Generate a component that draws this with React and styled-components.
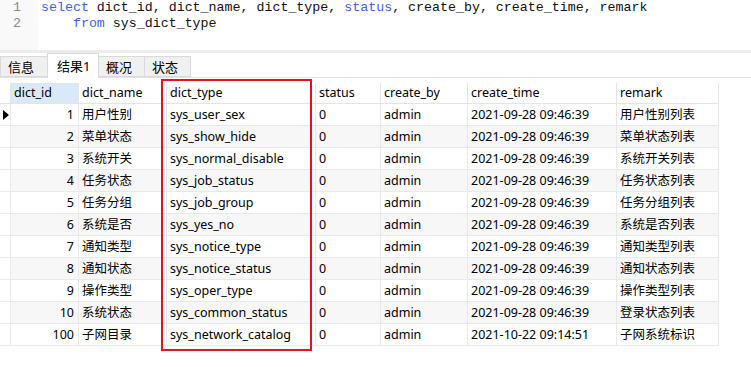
import styled, { createGlobalStyle } from "styled-components";

const GlobalStyle = createGlobalStyle`
  html, body {
    margin: 0;
    padding: 0;
    background: #fff;
  }
  body {
    font-family: "Noto Sans", "Noto Sans CJK SC", sans-serif;
    font-size: 12.5px;
    color: #000;
  }
`;

const columns = "11px 68px 88px 149px 65px 87px 149px 102px";

const rows = [
  [1, "用户性别", "sys_user_sex", "2021-09-28 09:46:39", "用户性别列表"],
  [2, "菜单状态", "sys_show_hide", "2021-09-28 09:46:39", "菜单状态列表"],
  [3, "系统开关", "sys_normal_disable", "2021-09-28 09:46:39", "系统开关列表"],
  [4, "任务状态", "sys_job_status", "2021-09-28 09:46:39", "任务状态列表"],
  [5, "任务分组", "sys_job_group", "2021-09-28 09:46:39", "任务分组列表"],
  [6, "系统是否", "sys_yes_no", "2021-09-28 09:46:39", "系统是否列表"],
  [7, "通知类型", "sys_notice_type", "2021-09-28 09:46:39", "通知类型列表"],
  [8, "通知状态", "sys_notice_status", "2021-09-28 09:46:39", "通知状态列表"],
  [9, "操作类型", "sys_oper_type", "2021-09-28 09:46:39", "操作类型列表"],
  [10, "系统状态", "sys_common_status", "2021-09-28 09:46:39", "登录状态列表"],
  [100, "子网目录", "sys_network_catalog", "2021-10-22 09:14:51", "子网系统标识"],
];

const tabs = [
  { label: "信息", width: 48 },
  { label: "结果1", width: 52, active: true },
  { label: "概况", width: 47 },
  { label: "状态", width: 47 },
];

export default function App() {
  return (
    <Page>
      <GlobalStyle />
      <Editor>
        <Gutter>
          <LineNo>1</LineNo>
          <LineNo>2</LineNo>
        </Gutter>
        <Code>
          <CodeLine>
            <Kw>select</Kw> dict_id, dict_name, dict_type, <Kw>status</Kw>, create_by, create_time, remark
          </CodeLine>
          <CodeLine>
            {"    "}<Kw>from</Kw> sys_dict_type
          </CodeLine>
        </Code>
      </Editor>
      <Splitter />
      <TabBar>
        {tabs.map((t) => (
          <Tab key={t.label} $active={t.active} $width={t.width}>
            {t.label}
          </Tab>
        ))}
      </TabBar>
      <GridArea>
        <Grid>
          <HeadRow>
            <HeadCell />
            <HeadCell $selected>dict_id</HeadCell>
            <HeadCell>dict_name</HeadCell>
            <HeadCell>dict_type</HeadCell>
            <HeadCell>status</HeadCell>
            <HeadCell>create_by</HeadCell>
            <HeadCell>create_time</HeadCell>
            <HeadCell>remark</HeadCell>
          </HeadRow>
          {rows.map((r, i) => (
            <Row key={r[0]} $striped={i % 2 === 1}>
              <Indicator>{i === 0 && <Arrow />}</Indicator>
              <Cell $num>{r[0]}</Cell>
              <Cell>{r[1]}</Cell>
              <Cell>{r[2]}</Cell>
              <Cell>0</Cell>
              <Cell>admin</Cell>
              <Cell>{r[3]}</Cell>
              <Cell>{r[4]}</Cell>
            </Row>
          ))}
          <Highlight />
        </Grid>
      </GridArea>
    </Page>
  );
}

const Page = styled.div`
  width: 751px;
  height: 367px;
  display: flex;
  flex-direction: column;
  overflow: hidden;
`;

const Editor = styled.div`
  height: 50px;
  display: flex;
  background: #fff;
`;

const Gutter = styled.div`
  width: 38px;
  background: #f9f9f9;
  display: flex;
  flex-direction: column;
  align-items: flex-end;
  padding: 0 17px 0 0;
  box-sizing: border-box;
`;

const LineNo = styled.div`
  font-family: "Liberation Mono", monospace;
  font-size: 13.3px;
  line-height: 16px;
  color: #8a8a8a;
`;

const Code = styled.div`
  padding-left: 3px;
  display: flex;
  flex-direction: column;
`;

const CodeLine = styled.div`
  font-family: "Liberation Mono", monospace;
  font-size: 13.3px;
  line-height: 16px;
  white-space: pre;
  color: #111;
`;

const Kw = styled.span`
  color: #3f5ff0;
`;

const Splitter = styled.div`
  height: 3px;
  background: #ececec;
`;

const TabBar = styled.div`
  height: 24px;
  display: flex;
  align-items: flex-end;
  border-bottom: 1px solid #e2e2e2;
`;

const Tab = styled.div`
  box-sizing: border-box;
  flex: none;
  width: ${(p) => p.$width}px;
  height: ${(p) => (p.$active ? "25px" : "21px")};
  margin-bottom: ${(p) => (p.$active ? "-1px" : "0")};
  padding: ${(p) => (p.$active ? "0 0 1px 9px" : "0 0 0 7px")};
  background: ${(p) => (p.$active ? "#fff" : "#f0f0f0")};
  border: 1px solid #d9d9d9;
  border-bottom: ${(p) => (p.$active ? "none" : "1px solid #d9d9d9")};
  margin-right: -1px;
  display: flex;
  align-items: center;
  font-size: 13px;
  color: #000;
`;

const GridArea = styled.div`
  padding-top: 5px;
  flex: 1;
`;

const Grid = styled.div`
  position: relative;
  width: 719px;
`;

const HeadRow = styled.div`
  display: grid;
  grid-template-columns: ${columns};
  height: 21px;
  box-sizing: border-box;
  border-bottom: 1px solid #e4e4e4;
`;

const HeadCell = styled.div`
  box-sizing: border-box;
  padding-left: 3px;
  line-height: 20px;
  white-space: nowrap;
  background: ${(p) => (p.$selected ? "#d9e9f7" : "#fff")};
  border-right: 1px solid #e4e4e4;
  color: #000;
`;

const Row = styled.div`
  display: grid;
  grid-template-columns: ${columns};
  height: 22px;
  box-sizing: border-box;
  border-bottom: 1px solid #e9e9e9;
  background: ${(p) => (p.$striped ? "#f7f7f7" : "#fff")};
`;

const Cell = styled.div`
  box-sizing: border-box;
  padding: ${(p) => (p.$num ? "0 4px 0 0" : "0 0 0 3px")};
  text-align: ${(p) => (p.$num ? "right" : "left")};
  line-height: 21px;
  white-space: nowrap;
  overflow: hidden;
  border-right: 1px solid #e9e9e9;
  color: #000;
`;

const Indicator = styled.div`
  box-sizing: border-box;
  border-right: 1px solid #e9e9e9;
  display: flex;
  align-items: center;
  justify-content: center;
  background: #fff;
`;

const Arrow = styled.span`
  width: 0;
  height: 0;
  border-top: 5px solid transparent;
  border-bottom: 5px solid transparent;
  border-left: 6px solid #000;
  margin-left: 1px;
`;

const Highlight = styled.div`
  position: absolute;
  left: 161px;
  top: -4px;
  width: 151px;
  height: 272px;
  box-sizing: border-box;
  border: 2px solid #e3131c;
  pointer-events: none;
`;
